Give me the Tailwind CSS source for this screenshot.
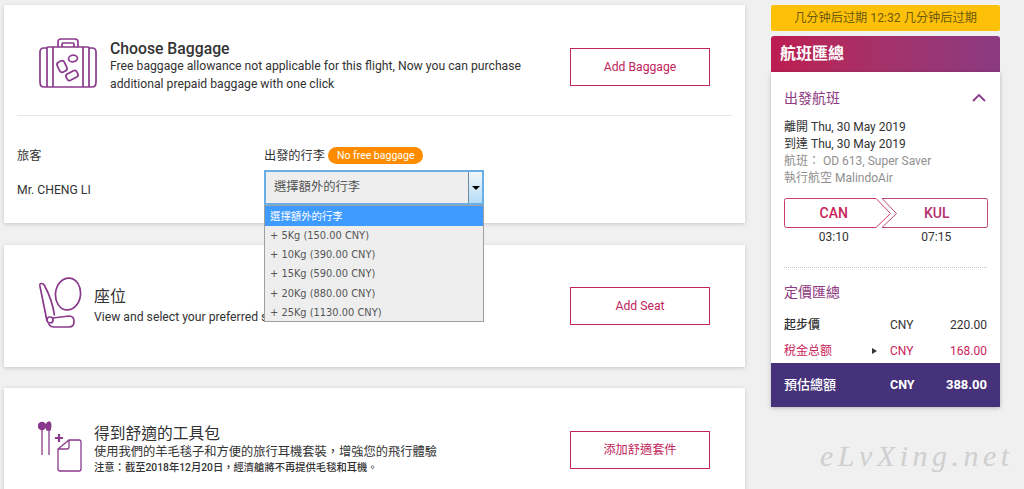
<!DOCTYPE html>
<html lang="zh-Hant"><head><meta charset="utf-8"><script src="https://cdn.jsdelivr.net/npm/@tailwindcss/browser@4"></script><title>Baggage</title></head>
<body class="m-0">
<div class="relative w-[1024px] h-[489px] overflow-hidden bg-[#f0f0f0] flex items-start font-['Roboto','Noto_Sans_CJK_TC',sans-serif] text-[#333]">
  <main class="w-[741px] ml-[4px] mt-[5px] flex-none flex flex-col">
    <section class="bg-white h-[218px] shadow-[0_1px_4px_rgba(0,0,0,0.18)] px-[13px] pt-[33px]">
      <div class="flex items-start h-[77px] border-b border-[#e6e6e6] box-content pb-0">
        <svg class="ml-[22px] mt-0 flex-none" width="58" height="52" viewBox="0 0 58 52" fill="none" stroke="#8a3a8c" stroke-width="1.700"><path d="M19 9V4q0-3 3-3h14q3 0 3 3v5M23 9V6q0-1 1-1h10q1 0 1 1v3"/><rect x="8" y="9" width="42" height="40" rx="1"/><path d="M8 10H5q-4 0-4 4v30q0 5 4 5h3M50 10h3q4 0 4 4v30q0 5-4 5h-3M14 9v40M44 9v40"/><ellipse cx="34" cy="20.500" rx="4.500" ry="3.300" transform="rotate(-10 34 20.500)"/><rect x="19" y="23" width="8" height="11" rx="3" transform="rotate(-25 23 28.500)"/><rect x="27" y="34" width="12" height="7" rx="2.500" transform="rotate(-28 33 37.500)"/></svg>
        <div class="w-[460px] ml-[13px] flex-none pt-[2px]">
          <h2 class="text-[15.750px] leading-[17px] font-medium text-[#333]">Choose Baggage</h2>
          <p class="text-[12.200px] leading-[18px] text-[#333]">Free baggage allowance not applicable for this flight, Now you can purchase<br>additional prepaid baggage with one click</p>
        </div>
        <button class="w-[140px] h-[38px] mt-[10px] border border-[#c2255c] text-[#c2255c] text-[12.200px]">Add Baggage</button>
      </div>
      <div class="flex text-[12.200px] text-[#333] mt-[30px]">
        <div class="w-[247px] flex-none leading-[18px]">
          <p class="mt-[1px]">旅客</p>
          <p class="mt-[16px]">Mr. CHENG LI</p>
        </div>
        <div class="w-[220px]">
          <div class="flex items-center gap-[3px] h-[18px] relative top-[1px]"><span>出發的行李</span><span class="relative -top-[1px] bg-[#ff8c00] text-white text-[10.500px] leading-[17px] rounded-full px-[9px]">No free baggage</span></div>
          <div class="mt-[6px] h-[35px] bg-[#eeeeee] border-2 border-[#6aaee8] flex items-center justify-between pl-[8px] text-[12.300px] text-[#555]"><span>選擇額外的行李</span>
            <span class="w-[14px] h-full bg-gradient-to-b from-[#f2f7fb] to-[#b5dcf6] border-l border-[#6d8aa5] flex items-center justify-center"><span class="w-0 h-0 border-x-[4px] border-x-transparent border-t-[4px] border-t-black"></span></span></div>
        </div>
      </div>
    </section>
    <section class="bg-white h-[122px] mt-[22px] shadow-[0_1px_4px_rgba(0,0,0,0.18)] flex items-start pl-[35px] pt-[32px]">
      <svg class="flex-none" width="44" height="52" viewBox="0 0 44 52" fill="none" stroke="#8a3a8c" stroke-width="1.700"><ellipse cx="29" cy="17" rx="12.500" ry="16" transform="rotate(6 29 17)"/><path d="M.8 8.500Q.5 6.500 2.500 6.500q2 0 3 2C10 17 14 27 15.500 38.500M.8 8.500L8 44"/><circle cx="11" cy="43" r="3"/><path d="M14 41l16-2q5 0 5 5.500t-5 5.500H15q-4 0-5.500-3.500"/></svg>
      <div class="ml-[11px] flex-none w-[476px] pt-[9px]">
        <h2 class="text-[16px] leading-[22px] text-[#333]">座位</h2>
        <p class="text-[12.200px] leading-[18px] text-[#333]">View and select your preferred seat</p>
      </div>
      <button class="w-[140px] h-[38px] mt-[10px] border border-[#c2255c] text-[#c2255c] text-[12.200px]">Add Seat</button>
    </section>
    <section class="bg-white h-[120px] mt-[21px] shadow-[0_1px_4px_rgba(0,0,0,0.18)] flex items-start pl-[34px] pt-[32px]">
      <svg class="flex-none" width="46" height="53" viewBox="0 0 46 53" fill="none" stroke="#8a3a8c" stroke-width="1.500"><circle cx="4" cy="6" r="3.500" fill="#8a3a8c"/><path d="M4 9v26M11 3v32" stroke-width="1.300"/><path d="M9 10q-2-7 2-8 3 1 1 8z" fill="#8a3a8c"/><path d="M17 18h8M21 14v8" stroke-width="2.200"/><path d="M31 20h10q2 0 2 2v27q0 2-2 2H22q-2 0-2-2V29zM20 29h9q2 0 2-2v-7" stroke-width="1.300"/></svg>
      <div class="ml-[10px] flex-none w-[476px] pt-[3px]">
        <h2 class="text-[15.750px] leading-[21px] text-[#333]">得到舒適的工具包</h2>
        <p class="text-[12.250px] leading-[15px] text-[#333] mt-[1px]">使用我們的羊毛毯子和方便的旅行耳機套裝，增強您的飛行體驗</p>
        <p class="text-[10.300px] leading-[14px] font-medium text-[#333] mt-[1px]">注意：截至2018年12月20日，經濟艙將不再提供毛毯和耳機。</p>
      </div>
      <button class="w-[140px] h-[38px] mt-[11px] border border-[#c2255c] text-[#c2255c] text-[12.200px]">添加舒適套件</button>
    </section>
  </main>
  <aside class="w-[229px] ml-[26px] mt-[5px] flex-none">
    <div class="h-[26px] bg-[#ffc107] rounded-[2px] flex items-center justify-center text-[12.200px] text-[#6b5a10]">几分钟后过期 12:32 几分钟后过期</div>
    <div class="h-[36px] mt-[5px] rounded-t-[3px] bg-gradient-to-r from-[#bd1c50] to-[#8b3a82] flex items-center pl-[9px] text-white text-[16px] font-bold">航班匯總</div>
    <div class="bg-white shadow-[0_1px_4px_rgba(0,0,0,0.25)]">
      <div class="px-[13px] pt-[16px]">
        <div class="flex items-center justify-between pr-0 h-[20px]"><h3 class="text-[14px] text-[#8e3a80]">出發航班</h3>
          <svg width="14" height="8" viewBox="0 0 14 8" class="mr-[1px]" fill="none" stroke="#8a3a8c" stroke-width="1.800"><path d="M1 7l6-6 6 6"/></svg></div>
        <div class="mt-[11px] text-[12px] leading-[17px]">
          <p>離開 Thu, 30 May 2019</p><p>到達 Thu, 30 May 2019</p>
          <p class="text-[#8f8f8f]">航班： OD 613, Super Saver</p><p class="text-[#8f8f8f]">執行航空 MalindoAir</p>
        </div>
        <div class="relative h-[30px] mt-[11px] grid grid-cols-2 text-[14px] font-medium text-center leading-[30px]">
          <svg class="absolute inset-0" width="204" height="31" viewBox="0 0 204 31" fill="none" stroke-width="1"><path d="M2.500.5H92l14.500 15L92 29.500H2.500q-2 0-2-2V2.500q0-2 2-2z" stroke="#cf3a69"/><path d="M98 .5h104q1.500 0 1.500 2v25q0 2-1.500 2H98l14.500-14z" stroke="#b9477a"/></svg>
          <span class="text-[#c9245a] pr-[2px]">CAN</span><span class="text-[#b4306e] pl-[1px]">KUL</span>
        </div>
        <div class="grid grid-cols-2 text-[12px] text-center leading-[16px] mt-[1px]"><span class="pr-[2px]">03:10</span><span>07:15</span></div>
        <div class="border-t border-dotted border-[#c4c4c4] mt-[22px]"></div>
        <h3 class="text-[14px] text-[#8e3a80] mt-[14px] leading-[20px]">定價匯總</h3>
        <div class="grid grid-cols-[88px_18px_1fr_auto] text-[12px] items-center mt-[10px]">
          <span class="h-[26px] leading-[26px] font-medium">起步價</span><span></span><span>CNY</span><span>220.00</span>
          <span class="h-[25px] leading-[26px] text-[#c9245a]">稅金总额</span><span class="w-0 h-0 border-y-[3.500px] border-y-transparent border-l-[5px] border-l-[#333]"></span><span class="text-[#c9245a]">CNY</span><span class="text-[#c9245a]">168.00</span>
        </div>
      </div>
      <div class="h-[44px] bg-[#46327a] text-white text-[13px] font-medium px-[13px] grid grid-cols-[106px_1fr_auto] items-center"><span>預估總額</span><span class="font-bold text-[12.500px]">CNY</span><span class="font-bold">388.00</span></div>
    </div>
  </aside>
  <ul class="absolute left-[264px] top-[205px] w-[220px] h-[117px] bg-[#eeeeee] border border-[#a0a0a0] font-['DejaVu_Sans','Noto_Sans_CJK_TC',sans-serif] text-[9.850px] text-[#555] leading-[19.200px]">
    <li class="bg-[#3f9bff] text-white pl-[5px] text-[10.400px] leading-[20px]">選擇額外的行李</li>
    <li class="pl-[5px]">+ 5Kg (150.00 CNY)</li>
    <li class="pl-[5px]">+ 10Kg (390.00 CNY)</li>
    <li class="pl-[5px]">+ 15Kg (590.00 CNY)</li>
    <li class="pl-[5px]">+ 20Kg (880.00 CNY)</li>
    <li class="pl-[5px]">+ 25Kg (1130.00 CNY)</li>
  </ul>
  <div class="absolute left-[820px] top-[438px] text-[30px] leading-[36px] italic tracking-[4.500px] text-[#cfcfcf] font-['Liberation_Serif',serif]">eLvXing.net</div>
</div>
</body></html>
